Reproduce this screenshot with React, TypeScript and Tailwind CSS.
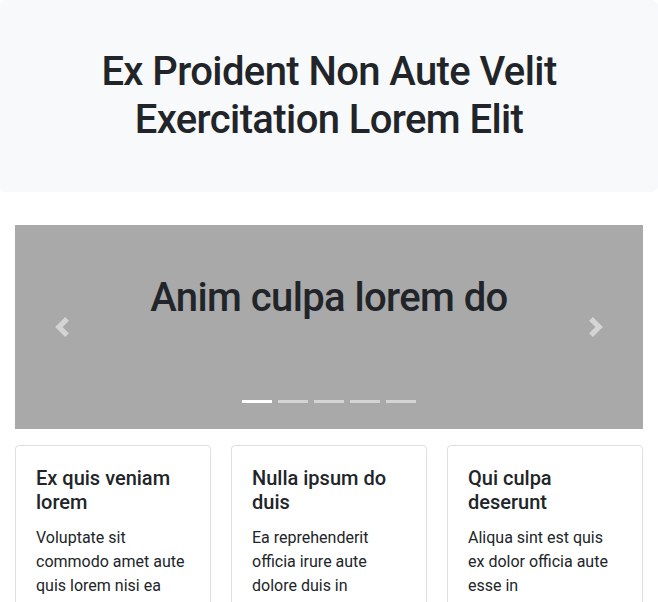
const cards = [
  { title: 'Ex quis veniam lorem', text: 'Voluptate sit commodo amet aute quis lorem nisi ea' },
  { title: 'Nulla ipsum do duis', text: 'Ea reprehenderit officia irure aute dolore duis in' },
  { title: 'Qui culpa deserunt', text: 'Aliqua sint est quis ex dolor officia aute esse in' },
];

function Chevron({ dir }: { dir: 'prev' | 'next' }) {
  const d =
    dir === 'prev'
      ? 'M5.25 0l-4 4 4 4 1.5-1.5L4.25 4l2.5-2.5L5.25 0z'
      : 'M2.75 0l-1.5 1.5L3.75 4l-2.5 2.5L2.75 8l4-4-4-4z';
  return (
    <svg viewBox="0 0 8 8" className="w-5 h-5" fill="#fff">
      <path d={d} />
    </svg>
  );
}

export default function App() {
  return (
    <div className="min-h-screen bg-white text-[#212529] font-['Roboto','Liberation_Sans',sans-serif]">
      {/* Jumbotron */}
      <header className="bg-[#f8f9fa] rounded-md py-12 px-8">
        <h1 className="text-center text-[40px] leading-[48px] font-medium tracking-[-0.015em]">
          Ex Proident Non Aute Velit
          <br />
          Exercitation Lorem Elit
        </h1>
      </header>

      <main className="px-[15px] mt-[33px]">
        {/* Carousel */}
        <div className="relative h-[204px] bg-[#a9a9a9]">
          <h2 className="pt-[49px] text-center text-[40px] leading-[48px] font-medium tracking-[-0.015em]">
            Anim culpa lorem do
          </h2>
          <button className="absolute inset-y-0 left-0 w-[15%] flex items-center justify-center opacity-50">
            <Chevron dir="prev" />
          </button>
          <button className="absolute inset-y-0 right-0 w-[15%] flex items-center justify-center opacity-50">
            <Chevron dir="next" />
          </button>
          <ol className="absolute bottom-[26px] inset-x-0 flex justify-center gap-[6px]">
            {[0, 1, 2, 3, 4].map((i) => (
              <li
                key={i}
                className={i === 0 ? 'w-[30px] h-[3px] bg-white' : 'w-[30px] h-[3px] bg-white/50'}
              />
            ))}
          </ol>
        </div>

        {/* Cards */}
        <div className="mt-4 grid grid-cols-3 gap-5">
          {cards.map((c) => (
            <div key={c.title} className="border border-black/[0.125] rounded-[4px] p-5">
              <h5 className="text-xl leading-6 font-medium mb-3">{c.title}</h5>
              <p className="text-base leading-6">{c.text}</p>
            </div>
          ))}
        </div>
      </main>
    </div>
  );
}
